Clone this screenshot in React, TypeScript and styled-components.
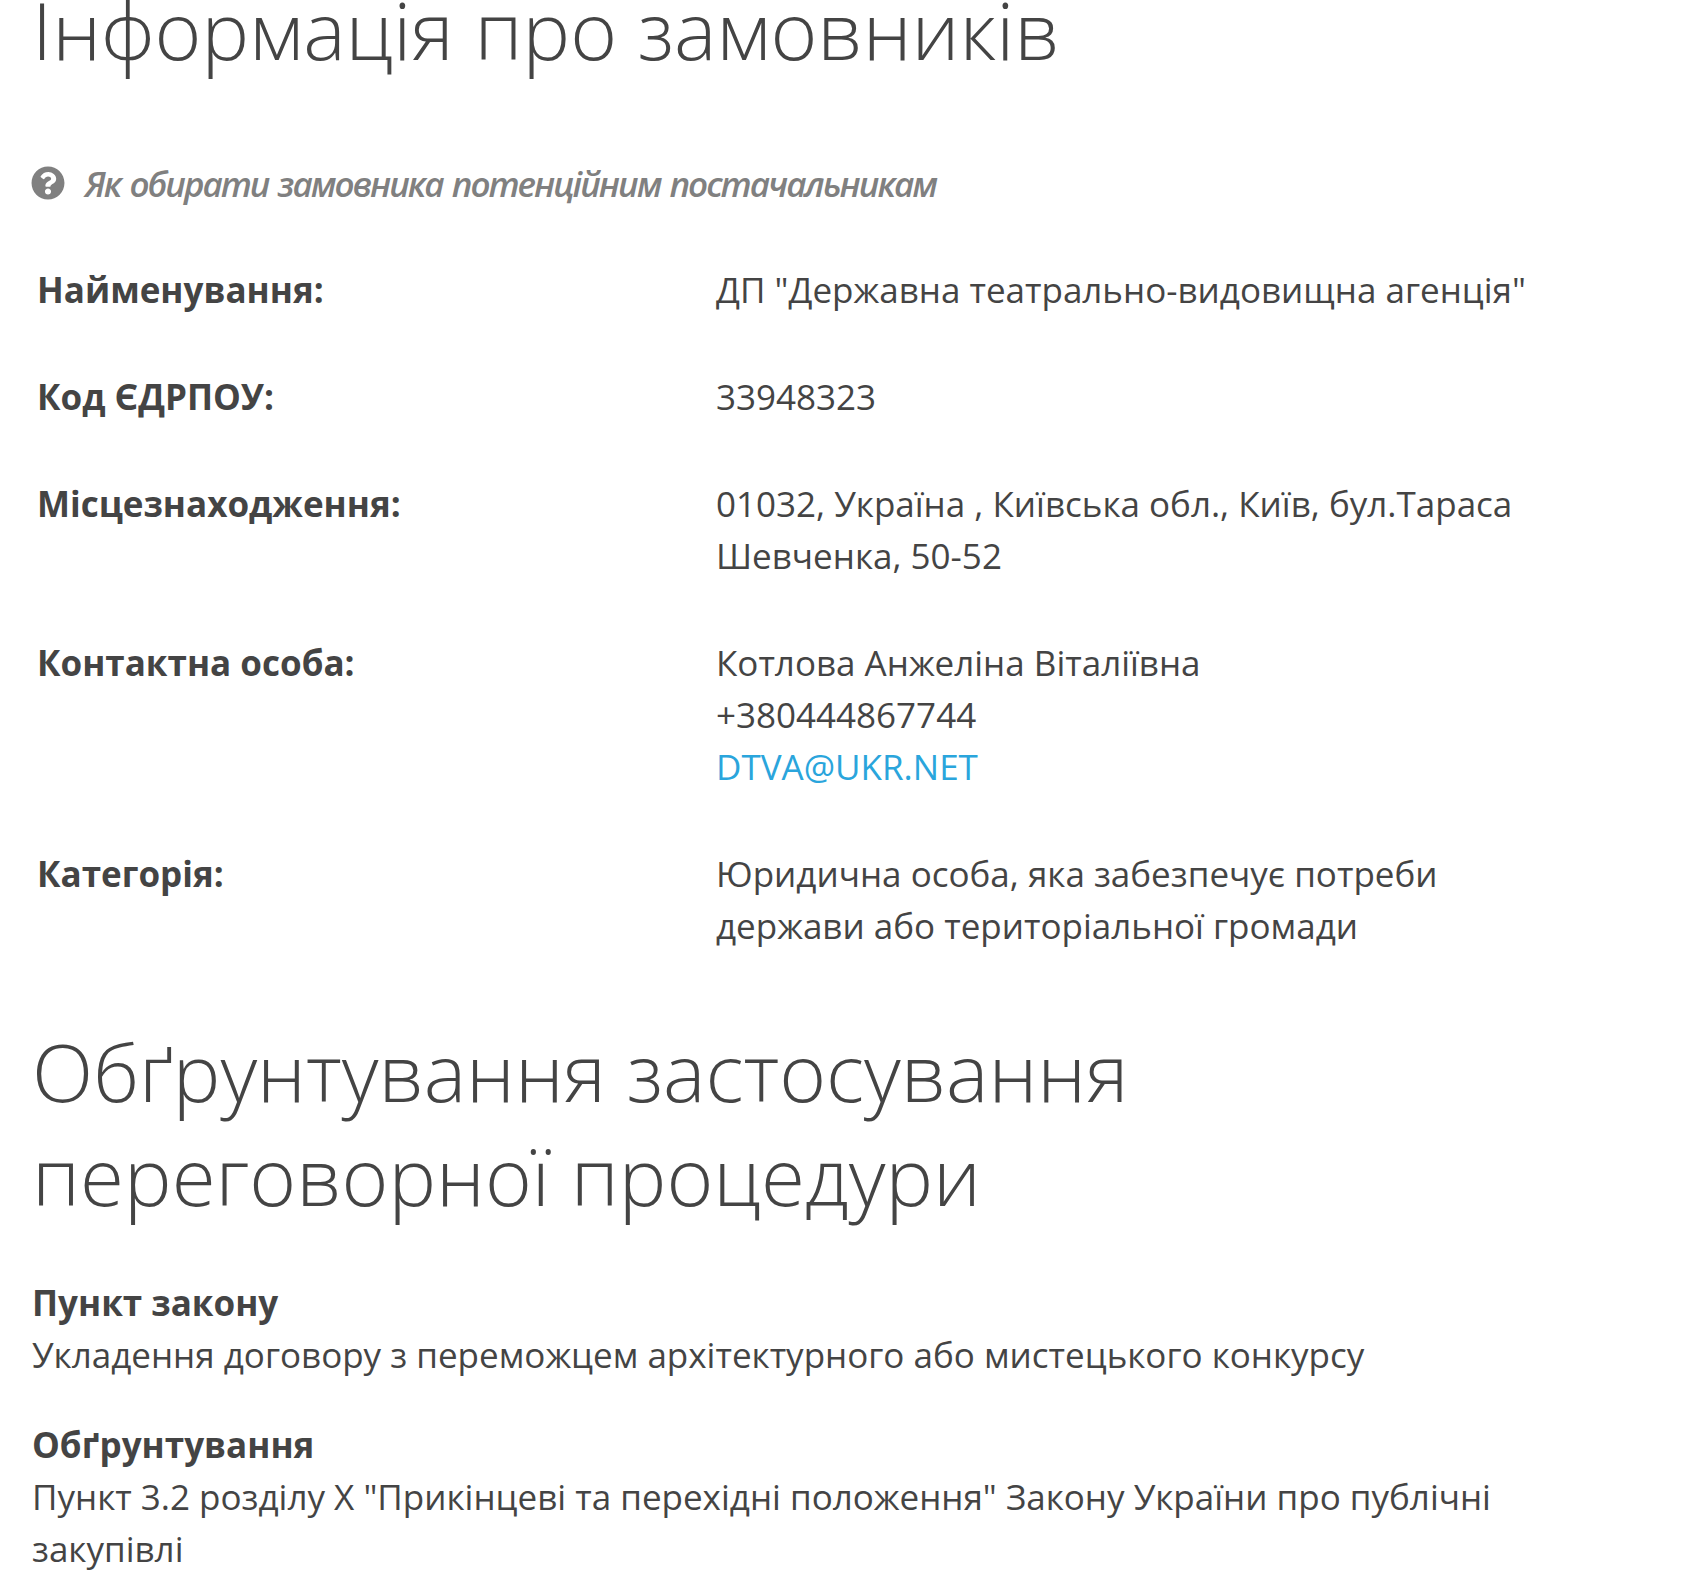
import React from "react";
import styled, { createGlobalStyle } from "styled-components";
import { FaQuestionCircle } from "react-icons/fa";

const Global = createGlobalStyle`
  html, body { margin: 0; padding: 0; background: #fff; }
  body { font-family: "Open Sans", "Noto Sans", sans-serif; color: #444; }
`;

const Page = styled.div`
  width: 1691px;
  height: 1587px;
  overflow: hidden;
  padding-left: 31px;
  box-sizing: border-box;
`;

const Heading = styled.h2<{ $top: number }>`
  margin: ${(p) => p.$top}px 0 0 1px;
  font-size: 80px;
  line-height: 104px;
  font-weight: 300;
  color: #444;
  width: 1300px;
`;

const Hint = styled.div`
  display: flex;
  align-items: center;
  gap: 20px;
  margin-top: 82px;
  height: 40px;
  font-size: 35px;
  font-style: italic;
  font-weight: 600;
  letter-spacing: -2px;
  word-spacing: 2px;
  color: #808080;
`;

const HintIcon = styled(FaQuestionCircle)`
  flex: none;
  width: 34px;
  height: 34px;
  color: #808080;
`;

const Table = styled.div`
  margin-top: 61px;
  padding-left: 6px;
`;

const Row = styled.div`
  display: grid;
  grid-template-columns: 679px 830px;
  font-size: 35px;
  line-height: 52px;
  padding-bottom: 55px;
`;

const Label = styled.div`
  font-weight: 700;
`;

const Value = styled.div``;

const Mail = styled.a`
  color: #2aa5dc;
  text-decoration: none;
`;

const Block = styled.div<{ $top: number }>`
  margin: ${(p) => p.$top}px 0 0 1px;
  font-size: 35px;
  line-height: 52px;
  width: 1500px;
`;

const Strong = styled.div`
  font-weight: 700;
`;

export default function App() {
  return (
    <Page>
      <Global />
      <Heading $top={-23}>Інформація про замовників</Heading>
      <Hint>
        <HintIcon />
        <span>Як обирати замовника потенційним постачальникам</span>
      </Hint>
      <Table>
        <Row>
          <Label>Найменування:</Label>
          <Value>ДП "Державна театрально-видовищна агенція"</Value>
        </Row>
        <Row>
          <Label>Код ЄДРПОУ:</Label>
          <Value>33948323</Value>
        </Row>
        <Row>
          <Label>Місцезнаходження:</Label>
          <Value>01032, Україна , Київська обл., Київ, бул.Тараса Шевченка, 50-52</Value>
        </Row>
        <Row>
          <Label>Контактна особа:</Label>
          <Value>
            Котлова Анжеліна Віталіївна
            <br />
            +380444867744
            <br />
            <Mail href="#">DTVA@UKR.NET</Mail>
          </Value>
        </Row>
        <Row>
          <Label>Категорія:</Label>
          <Value>Юридична особа, яка забезпечує потреби держави або територіальної громади</Value>
        </Row>
      </Table>
      <Heading $top={12}>Обґрунтування застосування переговорної процедури</Heading>
      <Block $top={50}>
        <Strong>Пункт закону</Strong>
        Укладення договору з переможцем архітектурного або мистецького конкурсу
      </Block>
      <Block $top={38}>
        <Strong>Обґрунтування</Strong>
        Пункт 3.2 розділу X "Прикінцеві та перехідні положення" Закону України про публічні закупівлі
      </Block>
    </Page>
  );
}
